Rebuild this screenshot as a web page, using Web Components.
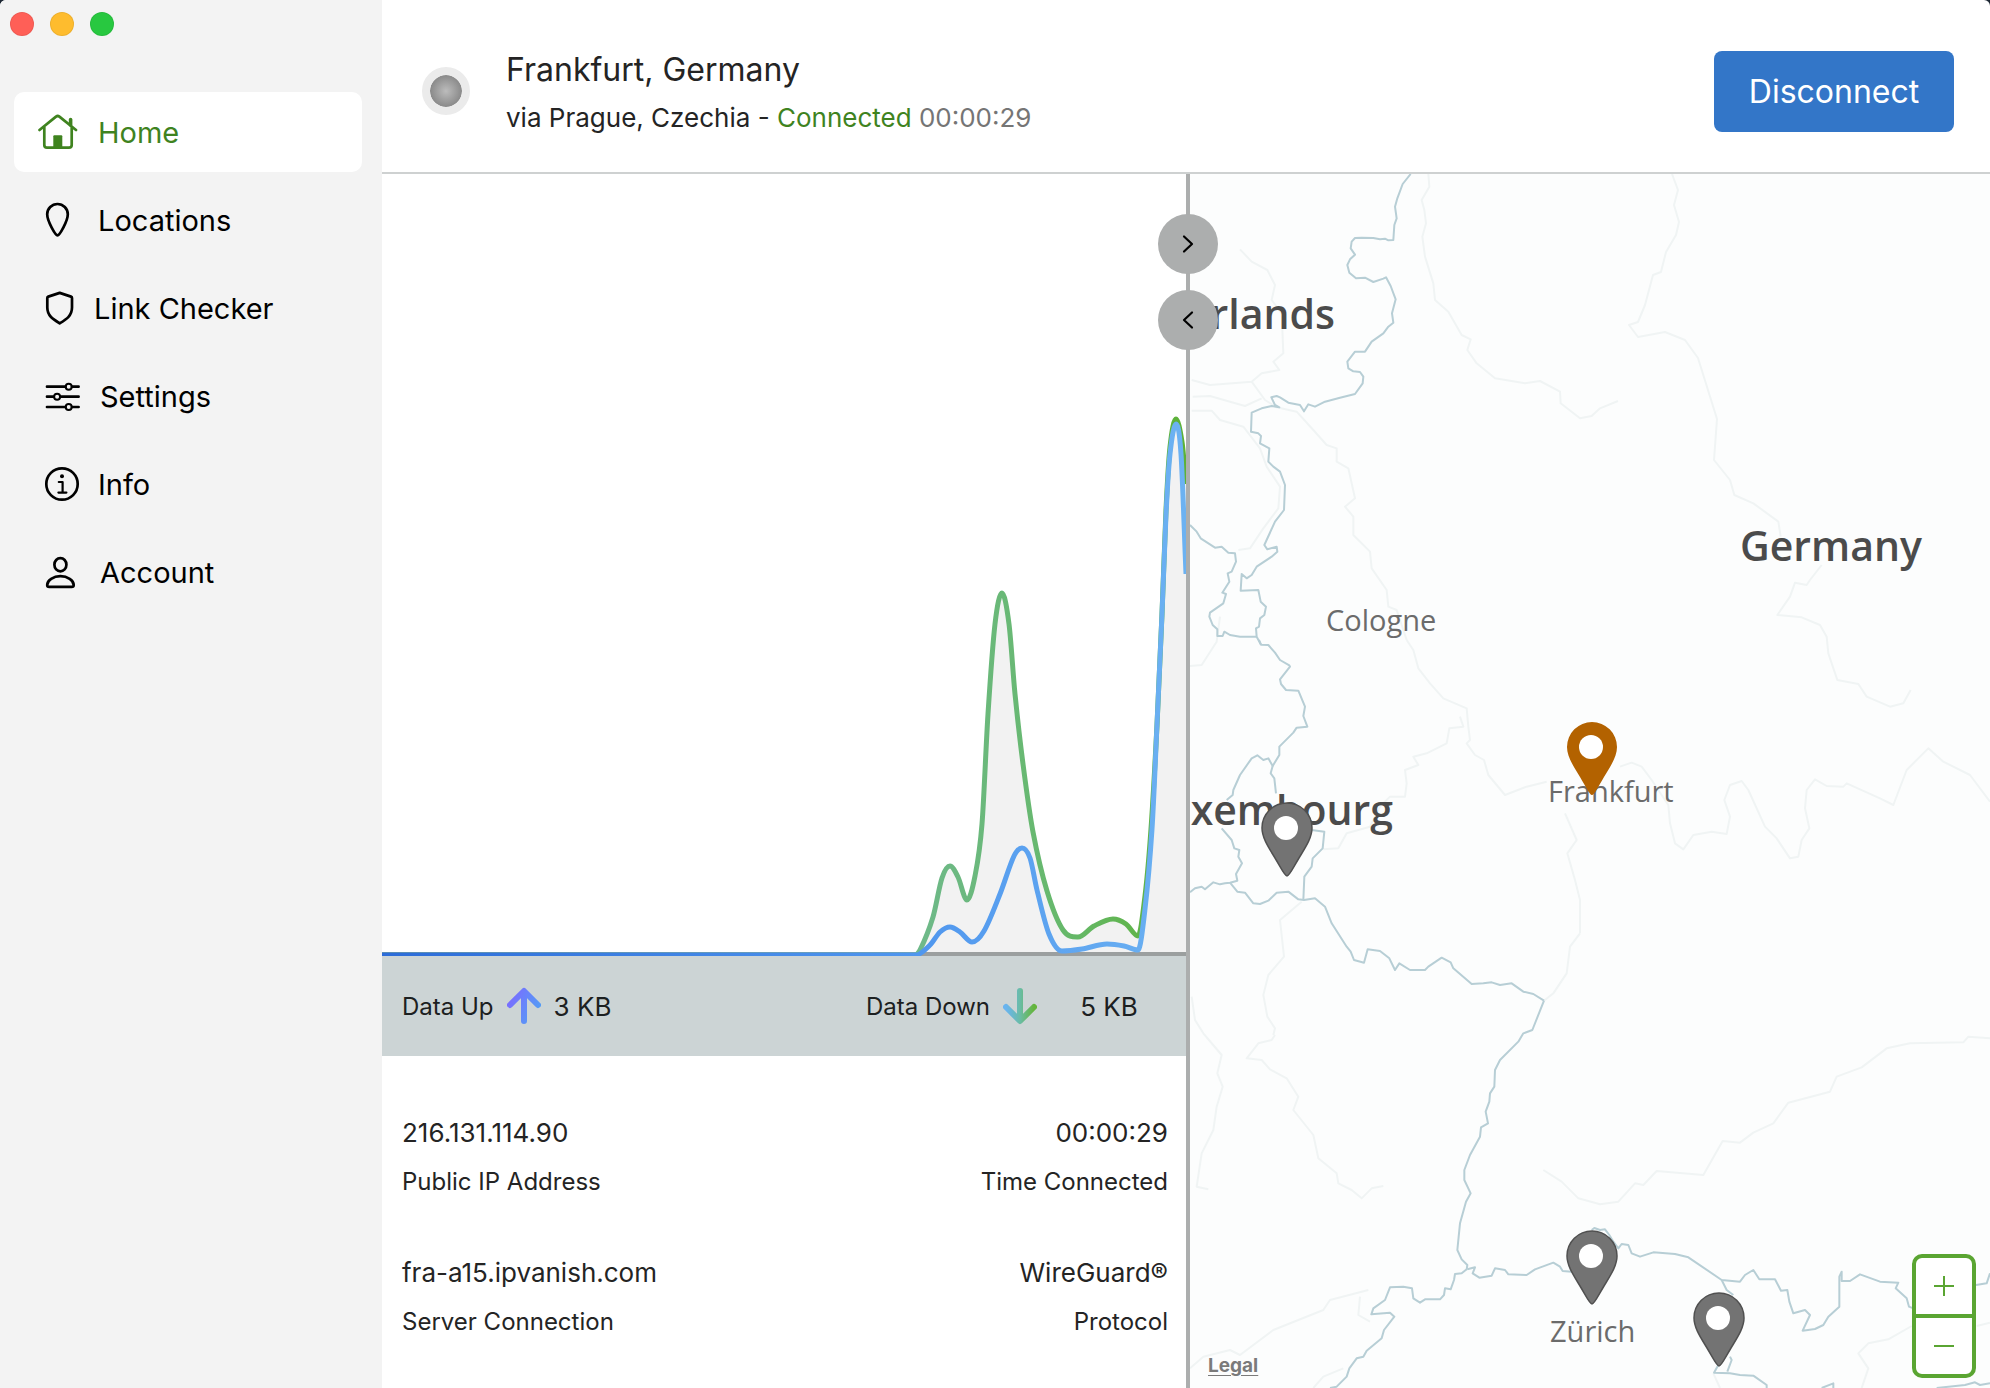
<!DOCTYPE html>
<html lang="en">
<head>
<meta charset="utf-8">
<title>VPN</title>
<style>
	html { background: #1d2733; }
	body {
		margin: 0;
		font-family: Inter, "Liberation Sans", sans-serif;
		color: #242424;
	}
</style>
</head>
<body>
<vpn-app>
	<side-bar slot="side">
		<nav-item icon="home" active>Home</nav-item>
		<nav-item icon="pin">Locations</nav-item>
		<nav-item icon="shield">Link Checker</nav-item>
		<nav-item icon="sliders">Settings</nav-item>
		<nav-item icon="info">Info</nav-item>
		<nav-item icon="person">Account</nav-item>
	</side-bar>
	<connection-header slot="header">
		<span slot="place">Frankfurt, Germany</span>
		<span slot="via">via Prague, Czechia -</span>
		<span slot="state">Connected</span>
		<span slot="time">00:00:29</span>
	</connection-header>
	<traffic-chart slot="stats"></traffic-chart>
	<data-bar slot="stats" up="3 KB" down="5 KB"></data-bar>
	<detail-list slot="stats">
		<detail-cell label="Public IP Address">216.131.114.90</detail-cell>
		<detail-cell label="Time Connected" end>00:00:29</detail-cell>
		<detail-cell label="Server Connection">fra-a15.ipvanish.com</detail-cell>
		<detail-cell label="Protocol" end>WireGuard®</detail-cell>
	</detail-list>
	<pane-divider slot="divider"></pane-divider>
	<server-map slot="map">
		<map-pin x="97" y="703" label="Luxembourg"></map-pin>
		<map-pin x="402" y="622" label="Frankfurt" current></map-pin>
		<map-pin x="402" y="1131" label="Zürich"></map-pin>
		<map-pin x="529" y="1193" label="Vaduz"></map-pin>
	</server-map>
</vpn-app>

<script>
( function() {
	function define(name, html, setup) {
		var tpl = document.createElement('template') ;
		tpl.innerHTML = html ;
		customElements.define(name, class extends HTMLElement {
			constructor() {
				super() ;
				this.attachShadow({mode:'open'}).appendChild(tpl.content.cloneNode(true)) ;
			}
			connectedCallback() {
				if ( setup ) setup(this, this.shadowRoot) ;
			}
		}) ;
	}

	define('vpn-app', `
		<style>
			:host {
				display: grid;
				grid-template-columns: 382px minmax(0, 1fr);
				min-height: 100vh;
				background: #fff;
				border-radius: 6px 6px 0 0;
				overflow: hidden;
			}
			main { display: flex; flex-direction: column; min-width: 0; }
			.panes {
				flex: 1;
				display: grid;
				grid-template-columns: minmax(0, 201fr) 4px minmax(0, 200fr);
			}
			.stats { display: flex; flex-direction: column; }
		</style>
		<slot name="side"></slot>
		<main>
			<slot name="header"></slot>
			<div class="panes">
				<section class="stats"><slot name="stats"></slot></section>
				<slot name="divider"></slot>
				<slot name="map"></slot>
			</div>
		</main>`) ;

	define('side-bar', `
		<style>
			:host { display: block; background: #f3f3f3; }
			.window { display: flex; gap: 16px; padding: 12px 10px; }
			.window button { width: 24px; height: 24px; padding: 0; border: 1px solid #0001; border-radius: 50%; }
			.close { background: #ff5f57; }
			.min { background: #febc2e; }
			.max { background: #28c840; }
			nav { display: flex; flex-direction: column; gap: 8px; padding: 44px 20px 24px 14px; }
		</style>
		<div class="window">
			<button class="close" aria-label="Close"></button>
			<button class="min" aria-label="Minimize"></button>
			<button class="max" aria-label="Zoom"></button>
		</div>
		<nav><slot></slot></nav>`) ;

	// w is the natural width of each icon, all are 40 high
	var icons = {
		home: { w: 43, d: `<path d="M1.5 18 18 4.6Q19.7 3.4 21.4 4.6L38 18M6.3 15V33Q6.3 35.7 9 35.7H31Q33.7 35.7 33.7 33V15"/><path d="M32.6 7.5V13" stroke-width="3.6"/><path d="M15.3 24.3Q15.3 23.3 16.3 23.3H23.3Q24.3 23.3 24.3 24.3V35H15.3Z" fill="currentColor" stroke="none"/>` },
		pin: { w: 43, d: `<path d="M19.5 35.4C17.4 35.4 9.2 21 9.2 14.3A10.3 10.3 0 0 1 29.8 14.3C29.8 21 21.6 35.4 19.5 35.4Z"/>` },
		shield: { w: 39, d: `<path d="M21.7 4.9 33 8.6Q34 9 34 10V19.5C34 28 28 31.5 21.7 35.3 15.4 31.5 9.3 28 9.3 19.5V10Q9.3 9 10.3 8.6Z"/>` },
		sliders: { w: 45, d: `<path d="M9 10.7H27.4M34 10.7H40.6M9 20.7H15.8M22.4 20.7H40.6M9 31H27.4M34 31H40.6"/><g stroke-width="2"><circle cx="30.7" cy="10.7" r="3"/><circle cx="19.1" cy="20.7" r="3"/><circle cx="30.7" cy="31" r="3"/></g>` },
		info: { w: 43, d: `<circle cx="24" cy="20" r="15.7"/><circle cx="24" cy="12.2" r="2" fill="currentColor" stroke="none"/><path d="M20.8 18H24.6V28.6M20.4 28.6H28.4" stroke-width="2.2"/>` },
		person: { w: 45, d: `<ellipse cx="22.4" cy="12.7" rx="6" ry="6.6"/><path d="M22.4 24.2C29.5 24.2 35.7 28.4 35.7 33Q35.7 34.9 33.6 34.9H11.2Q9.2 34.9 9.2 33C9.2 28.4 15.4 24.2 22.4 24.2Z"/>` }
	} ;

	define('nav-item', `
		<style>
			:host { display: block; }
			a {
				display: flex;
				align-items: center;
				gap: 17px;
				height: 80px;
				padding: 0 24px;
				border-radius: 10px;
				font-size: 29px;
				color: #000;
				text-decoration: none;
			}
			:host([active]) a { background: #fff; color: #3f831f; }
			svg { flex: none; fill: none; stroke: currentColor; stroke-width: 2.7; stroke-linecap: round; stroke-linejoin: round; }
		</style>
		<a href="#"><svg height="40" aria-hidden="true"></svg><slot></slot></a>`,
	function(el, root) {
		var icon = icons[el.getAttribute('icon')] ;
		var svg = root.querySelector('svg') ;
		svg.setAttribute('width', icon.w) ;
		svg.innerHTML = icon.d ;
	}) ;

	define('connection-header', `
		<style>
			:host {
				display: flex;
				align-items: center;
				height: 174px;
				padding: 0 36px 0 40px;
				border-bottom: 2px solid #ced1d1;
				box-sizing: border-box;
			}
			.dot {
				width: 32px;
				height: 32px;
				margin-top: 10px;
				border: 8px solid #ebebeb;
				border-radius: 50%;
				background: radial-gradient(circle, #bcbcbc, #868686 75%);
				background-clip: padding-box;
			}
			.text { flex: 1; margin: 12px 0 0 36px; }
			h1 { margin: 0; font-size: 32px; line-height: 44px; font-weight: 400; }
			p { margin: 8px 0 0; font-size: 26px; line-height: 36px; }
			.state { color: #3f831f; }
			.time { color: #757575; }
			button {
				width: 240px;
				height: 81px;
				margin-top: 10px;
				border: 0;
				border-radius: 8px;
				background: #3376c8;
				color: #fff;
				font: inherit;
				font-size: 32px;
			}
		</style>
		<div class="dot"></div>
		<div class="text">
			<h1><slot name="place"></slot></h1>
			<p><slot name="via"></slot> <span class="state"><slot name="state"></slot></span> <span class="time"><slot name="time"></slot></span></p>
		</div>
		<button type="button">Disconnect</button>`) ;

	// cubic through the points, level at every peak and dip
	function curve(p) {
		var n = p.length, s = [], m = [], i ;
		for ( i = 0 ; i < n-1 ; ++i ) s[i] = (p[i+1][1]-p[i][1]) / (p[i+1][0]-p[i][0]) ;
		m[0] = s[0] ;
		m[n-1] = s[n-2] ;
		for ( i = 1 ; i < n-1 ; ++i )
			m[i] = s[i-1]*s[i] <= 0 ? 0 : (p[i+1][1]-p[i-1][1]) / (p[i+1][0]-p[i-1][0]) ;
		var d = 'M' + p[0] ;
		for ( i = 0 ; i < n-1 ; ++i ) {
			var h = (p[i+1][0]-p[i][0]) / 3 ;
			d += 'C' + [p[i][0]+h, p[i][1]+m[i]*h, p[i+1][0]-h, p[i+1][1]-m[i+1]*h, p[i+1][0], p[i+1][1]] ;
		}
		return d ;
	}

	var down = [[0,781],[532,781],[538,776],[551,743],[560,704],[568,692],[576,703],[585,726],[593,702],[600,650],[606,540],[613,450],[620,419],[627,450],[633,520],[641,590],[651,658],[665,717],[681,756],[696,763],[712,752],[731,745],[744,750],[756,762],[763,722],[769,655],[775,551],[780,440],[784,336],[788,273],[794,245],[800,268],[804,310]] ;
	var up = [[0,781],[534,781],[548,771],[558,758],[568,753],[578,758],[590,768],[602,757],[618,720],[632,682],[640,674],[648,684],[655,716],[667,760],[680,777],[700,775],[725,770],[742,772],[756,776],[763,735],[770,655],[775,551],[780,440],[784,341],[788,280],[794,250],[799,280],[804,400]] ;

	define('traffic-chart', `
		<style>
			:host { display: block; flex: 1; min-height: 400px; position: relative; }
			svg { position: absolute; inset: 0; width: 100%; height: 100%; }
			.line { fill: none; stroke-width: 5; stroke-linejoin: round; }
		</style>
		<svg viewBox="0 0 804 782" preserveAspectRatio="none" role="img" aria-label="Data transfer">
			<defs>
				<linearGradient id="down" gradientUnits="userSpaceOnUse" x1="530" x2="804"><stop stop-color="#6fb98b"/><stop offset=".6" stop-color="#65b867"/><stop offset="1" stop-color="#5cb136"/></linearGradient>
				<linearGradient id="up" gradientUnits="userSpaceOnUse" x1="0" x2="804"><stop stop-color="#2c6cd8"/><stop offset=".66" stop-color="#4f96ee"/><stop offset="1" stop-color="#6cb2f2"/></linearGradient>
			</defs>
			<path class="area" fill="#f2f2f2"/>
			<path d="M0 780H804" stroke="#9b9f9f" stroke-width="4"/>
			<path class="line down" stroke="url(#down)"/>
			<path class="line up" stroke="url(#up)"/>
		</svg>`,
	function(el, root) {
		root.querySelector('.area').setAttribute('d', curve(down) + 'V782H0Z') ;
		root.querySelector('.down').setAttribute('d', curve(down)) ;
		root.querySelector('.up').setAttribute('d', curve(up)) ;
	}) ;

	define('data-bar', `
		<style>
			:host { display: flex; justify-content: space-between; background: #ccd4d5; padding: 0 18px 0 20px; height: 100px; color: #1c2021; }
			div { display: flex; align-items: center; gap: 13px; font-size: 24px; }
			b { font-weight: 400; font-size: 26px; }
			.down b { width: 118px; text-align: center; }
			svg { fill: none; stroke-width: 6; stroke-linecap: round; stroke-linejoin: round; }
		</style>
		<div class="up">
			<span>Data Up</span>
			<svg width="34" height="38" aria-hidden="true">
				<defs><linearGradient id="up-arrow" gradientUnits="userSpaceOnUse" x1="2" y1="10" x2="32" y2="24"><stop stop-color="#7a6cff"/><stop offset="1" stop-color="#549df5"/></linearGradient></defs>
				<path d="M17 34V5M3 18 17 4 31 18" stroke="url(#up-arrow)"/>
			</svg>
			<b></b>
		</div>
		<div class="down">
			<span>Data Down</span>
			<svg width="34" height="38" aria-hidden="true">
				<defs><linearGradient id="down-arrow" gradientUnits="userSpaceOnUse" x1="3" x2="31"><stop stop-color="#69b4f0"/><stop offset=".5" stop-color="#6abca6"/><stop offset="1" stop-color="#64b53c"/></linearGradient></defs>
				<path d="M17 4V33M3 20 17 34 31 20" stroke="url(#down-arrow)"/>
			</svg>
			<b></b>
		</div>`,
	function(el, root) {
		root.querySelector('.up b').textContent = el.getAttribute('up') ;
		root.querySelector('.down b').textContent = el.getAttribute('down') ;
	}) ;

	define('detail-list', `
		<style>
			:host { display: grid; grid-template-columns: 1fr 1fr; row-gap: 60px; padding: 61px 18px 51px 20px; }
		</style>
		<slot></slot>`) ;

	define('detail-cell', `
		<style>
			:host { display: flex; flex-direction: column; gap: 18px; }
			:host([end]) { text-align: right; }
			.value { font-size: 26px; line-height: 32px; }
			.label { font-size: 24px; line-height: 30px; }
		</style>
		<div class="value"><slot></slot></div>
		<div class="label"></div>`,
	function(el, root) {
		root.querySelector('.label').textContent = el.getAttribute('label') ;
	}) ;

	define('pane-divider', `
		<style>
			:host { display: flex; flex-direction: column; align-items: center; gap: 16px; padding-top: 40px; background: #acaeae; z-index: 1; }
			button { flex: none; display: grid; place-items: center; width: 60px; height: 60px; padding: 0; border: 0; border-radius: 50%; background: #acaeae; }
			svg { fill: none; stroke: #000; stroke-width: 2.2; stroke-linecap: round; stroke-linejoin: round; }
		</style>
		<button type="button" aria-label="Expand chart"><svg width="20" height="20"><path d="M6 2.5 14 10 6 17.5"/></svg></button>
		<button type="button" aria-label="Expand map"><svg width="20" height="20"><path d="M14 2.5 6 10 14 17.5"/></svg></button>`) ;

	// Outlines are digitised at 3 units per map pixel, per sheet.
	// at: sheet origin on the map
	var sheets = [
		{ at: [-10,-4],
		borders: [
			'692,12 668,42 652,85 645,110 650,145 643,165 640,210 625,211 615,206 600,208 580,204 545,203 525,204 515,215 512,235 525,254 510,268 502,285 508,308 528,325 555,323 580,336 610,326 618,322 632,348 647,388 636,430 640,458 625,470 610,490 575,515 555,545 525,545 502,575 505,595 520,604 540,606 550,620 548,640 525,672 480,683 435,695 405,710 385,703 372,724 360,705 325,698 300,682 290,678 274,682 285,705 298,712 275,708 245,715 215,728 213,785 235,790 243,798 240,820 268,835 265,875 280,890 300,905 315,945 312,1020 285,1055 253,1125 262,1138 290,1130 292,1145 275,1160 230,1190 215,1215 200,1225 185,1212 182,1262 235,1260 242,1295 258,1310 253,1335 240,1345 237,1370 228,1375 230,1400 243,1424',
			'30,1065 50,1085 62,1105 105,1133 125,1130 145,1148 165,1150 168,1175 155,1205 143,1210 148,1235 127,1268 138,1272 130,1300 90,1328 88,1340 98,1365 112,1378 112,1398 128,1398 133,1385 150,1395 180,1400 230,1400'
		],
		rivers: [
			'745,12 748,50 725,90 733,120 738,160 727,200 735,260 760,340 765,390 805,425 845,495 872,508 862,540 890,580 945,625 1035,640 1080,633 1140,665 1142,700 1200,745 1235,738 1260,715 1314,693',
			'180,238 215,275 262,300 285,345 275,390 305,430 310,550 280,575 298,600 245,610 215,635 90,645 35,630',
			'215,635 255,690 290,712 350,725 400,780 440,825 470,835 470,875 505,895 525,985 495,1010 520,1040 520,1095 570,1145 575,1195 620,1260 625,1310 650,1320 680,1410',
			'38,680 90,678 150,695 195,708 245,685',
			'35,722 95,722 120,750 190,770 240,835 260,890 300,950 295,1015 250,1075 210,1135 175,1140',
			'30,1488 65,1485 110,1415 120,1340'
		] },
		{ at: [-10,466],
		borders: [
			'237,0 243,14 265,15 285,38 300,60 328,76 330,80 300,118 303,132 318,150 355,152 375,200 370,228 382,260 350,263 340,278 298,320 298,345 278,378 265,355 250,360 232,346 215,355 180,405 160,450 158,465 140,480',
			'278,378 272,400 283,415 288,460',
			'125,565 155,600 163,625 178,630 175,650 186,670 168,702 172,722 150,728 135,730 120,733 100,727 75,748 65,740 45,745 30,757',
			'150,728 172,755 195,758 220,790 240,792 265,782 290,758 325,755 355,778 372,780 405,775 435,800 455,850 500,920 512,935 522,960 552,968 563,928 600,933 628,955 645,990 658,970 690,990 735,990 745,980 785,953 812,967 820,985 875,1032 910,1030 935,1027 960,1035 995,1030 1030,1055 1060,1062 1092,1082',
			'395,570 433,575 428,625 398,655 395,680 373,710 370,780'
		],
		rivers: [
			'680,0 700,30 715,85 750,130 790,175 860,205 865,260 870,300 860,310 885,345 912,360 925,405 975,465 1040,440 1100,425',
			'840,230 850,260 808,265 800,310 740,340 700,350 715,375 675,390 680,430 675,470 630,470 600,500 570,560 500,580 475,625 430,628',
			'365,785 300,840 312,950 265,1005 250,1065 262,1130 285,1165 280,1185',
			'1200,880 1170,920 1160,1000 1120,1060 1092,1082'
		] },
		{ at: [-10,806],
		borders: [
			'1092,62 1057,150 1030,160 1015,185 960,240 945,270 943,320 930,340 928,365 917,395 924,430 903,442 900,470 870,525 853,570 853,600 872,640 858,665 840,730 832,810 845,838 862,855 860,868 845,880 825,882 822,900 812,928 795,925 792,945 780,958 735,958 720,968 700,955 696,925 670,920 630,922 615,960 580,985 574,1003 630,998 643,1010 612,1050 605,1075 560,1112 550,1130 530,1135 508,1165 500,1190 470,1220 450,1224',
			'862,868 885,862 878,880 898,893 935,887 945,865 975,870 985,883 1040,885 1065,868 1120,848 1140,860 1148,873 1175,875'
		],
		rivers: [
			'285,165 275,180 235,190 200,235 245,240 270,268 320,295 355,350 340,390 400,465 415,535 470,580 475,610 515,630 545,655 575,625 610,618',
			'35,50 45,120 70,160 125,225 112,280 128,320 110,380 100,450 65,520 50,620 85,628',
			'30,1165 70,1130 150,1110 180,1125 280,1050 430,990 450,960 565,930',
			'540,950 535,1005 570,1025',
			'400,1224 430,1190 490,1165'
		] },
		{ at: [370,306],
		borders: [],
		rivers: [
			'336,-918 354,-870 342,-825 357,-774 348,-735 318,-684 303,-624 279,-615 255,-525 234,-474 207,-465 234,-429 315,-444 375,-420 414,-366 471,-183 462,-60 510,0 523,45 580,70 655,125 662,170',
			'785,255 750,300 740,315 705,308 690,350 652,405 725,412 780,435 800,470 805,520 832,600 895,612 920,650 990,680 1030,670 1052,630',
			'180,860 215,848 245,860 275,900 325,975 330,1030 345,1090 370,1108 400,1065 455,1055 500,1062 510,1010 493,960 510,915 545,903 565,930 615,1040 650,1075 690,1135 715,1130 725,1080 748,1045 735,985 740,930 765,898 800,918 850,920 860,910 960,955 1000,975 1040,870 1105,805 1150,845 1230,885 1290,965',
			'15,1000 50,1080 22,1120 45,1200 60,1260 60,1360'
		] },
		{ at: [310,806],
		borders: [
			'275,750 283,744 300,750 315,748 328,765 340,785 355,805 365,792 385,795 395,820 420,830 460,817 525,822 565,832 665,900 720,905 735,885 760,870 778,898 825,898 843,932 862,930 868,965 880,1000 915,990 930,1005 908,1052 945,1047 970,1035 985,1010 1018,980 1018,890 1025,875 1025,903 1050,903 1080,883 1140,905 1195,908 1187,925 1220,955 1227,980 1240,985',
			'665,900 680,930 700,945',
			'1428,915 1460,910 1470,880',
			'690,1130 695,1140 682,1175',
			'655,1155 642,1178 690,1180 720,1185 760,1187 800,1215 800,1224',
			'965,1224 1000,1210 1000,1224',
			'1310,1224 1395,1215 1425,1207 1440,1215 1470,1210'
		],
		rivers: [
			'130,570 185,605 235,655 300,673 355,665 405,610 430,615 470,573 610,585 668,483 720,488 760,458 820,430 865,368 990,335 1010,290 1085,262 1160,205 1230,190 1390,187 1405,170 1470,175',
			'1235,1038 1165,1078 1105,1090 1075,1120 1105,1165 1085,1224',
			'1430,1038 1470,1028',
			'640,1180 660,1224'
		] }
	] ;

	define('server-map', `
		<style>
			:host { display: block; position: relative; overflow: hidden; background: #fcfdfd; }
			.land { position: absolute; top: 0; left: 0; width: 100%; height: 100%; }
			.land polyline { fill: none; stroke-width: 6; stroke-linejoin: round; }
			.river { stroke: #f0f4f4; }
			.border { stroke: #b7ced5; }
			text { font-family: "Open Sans", "Noto Sans", sans-serif; }
			.country { font-size: 41px; font-weight: 600; fill: #4b4b4b; }
			.city { font-size: 29px; fill: #6b6b6b; }
			a { position: absolute; left: 18px; bottom: 10px; font-size: 19px; line-height: 24px; font-weight: 700; color: #7a7a7a; text-underline-offset: 3px; }
			.zoom {
				position: absolute;
				right: 14px;
				bottom: 10px;
				width: 56px;
				border: 4px solid #5aa532;
				border-radius: 10px;
				background: #fff;
			}
			.zoom button { display: grid; place-items: center; width: 56px; height: 56px; padding: 0; border: 0; background: none; }
			.zoom button + button { height: 60px; border-top: 4px solid #5aa532; }
			.zoom path { stroke: #5aa532; stroke-width: 2; }
		</style>
		<svg class="land" viewBox="0 0 800 1214" preserveAspectRatio="xMinYMin slice">
			<g class="lines"></g>
			<text class="country" x="145" y="155" text-anchor="end">rlands</text>
			<text class="country" x="550" y="387">Germany</text>
			<text class="country" x="203" y="651" text-anchor="end">xembourg</text>
			<text class="city" x="136" y="457">Cologne</text>
			<text class="city" x="358" y="628">Frankfurt</text>
			<text class="city" x="360" y="1168">Zürich</text>
		</svg>
		<slot></slot>
		<a href="#">Legal</a>
		<div class="zoom">
			<button type="button" aria-label="Zoom in"><svg width="22" height="22"><path d="M1 11H21M11 1V21"/></svg></button>
			<button type="button" aria-label="Zoom out"><svg width="22" height="22"><path d="M1 11H21"/></svg></button>
		</div>`,
	function(el, root) {
		var out = '' ;
		function add(cls, list) {
			for ( var i = 0 ; i < list.length ; ++i )
				out += '<polyline class="' + cls + '" points="' + list[i] + '"/>' ;
		}
		sheets.forEach(function(s) {
			out += '<g transform="translate(' + s.at + ') scale(' + 1/3 + ')">' ;
			add('river', s.rivers) ;
			add('border', s.borders) ;
			out += '</g>' ;
		}) ;
		root.querySelector('.lines').innerHTML = out ;
	}) ;

	// x, y is the spot on the map that the tip points at
	define('map-pin', `
		<style>
			:host { position: absolute; width: 52px; height: 75px; transform: translate(-50%, -100%); --fill: #737373; --edge: #505050; }
			:host([current]) { --fill: #b36200; --edge: none; }
			button { display: block; padding: 0; border: 0; background: none; }
			svg { display: block; }
			path { fill: var(--fill); stroke: var(--edge); stroke-width: 1.5; }
		</style>
		<button type="button"><svg width="52" height="75">
			<path d="M26 74C23.6 74 20 66 14 56 8 46 1 36 1 26A25 25 0 0 1 51 26C51 36 44 46 38 56 32 66 28.4 74 26 74Z"/>
			<circle cx="25" cy="26" r="12" fill="#fff"/>
		</svg></button>`,
	function(el, root) {
		el.style.left = el.getAttribute('x') + 'px' ;
		el.style.top = el.getAttribute('y') + 'px' ;
		root.querySelector('button').setAttribute('aria-label', el.getAttribute('label')) ;
	}) ;
} ) () ;
</script>
</body>
</html>
